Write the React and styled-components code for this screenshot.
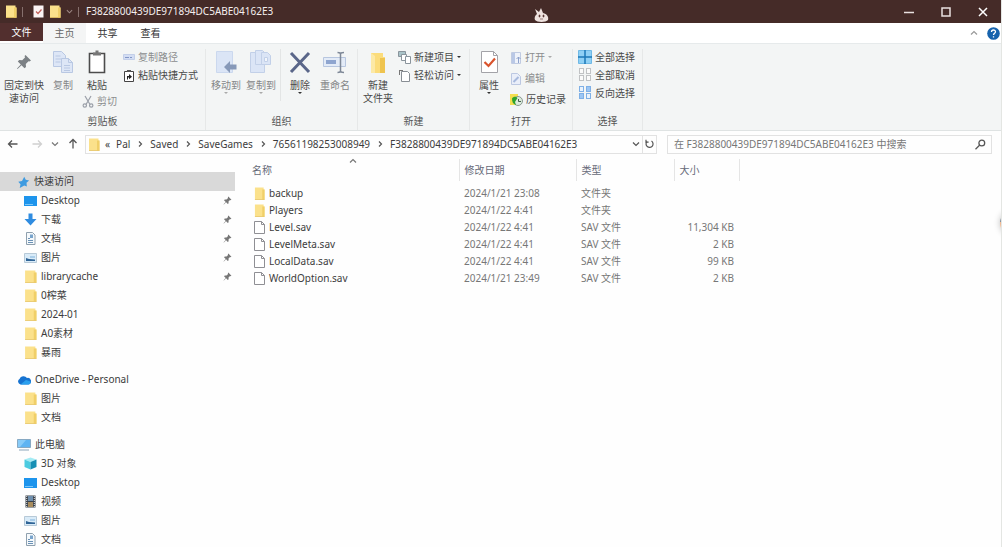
import React, { useState } from 'react';
import styled, { createGlobalStyle } from 'styled-components';

const GlobalStyle = createGlobalStyle`
  * {
    box-sizing: border-box;
  }
  body {
    margin: 0;
    background: #fefefe;
  }
  button, input, a, table {
    font: inherit;
    color: inherit;
  }
  button {
    margin: 0;
    padding: 0;
    border: none;
    background: none;
  }
  svg {
    display: block;
    flex: none;
  }
`
const Window = styled.div`
  position: relative;
  display: flex;
  flex-direction: column;
  height: 100vh;
  overflow: hidden;
  border-right: 1px solid #e4e6e3;
  font-family: "Noto Sans", "Noto Sans CJK SC", sans-serif;
  font-size: 10px;
  line-height: 13px;
  color: #3c3c3c;
`
const TitleBar = styled.header`
  display: flex;
  flex: none;
  align-items: center;
  height: 23px;
  padding-left: 5px;
  background: #452b28;
  color: #f4eeee;
`
const QuickTools = styled.div`
  display: flex;
  align-items: center;
  gap: 5px;
  margin-right: 7px;
`
const Bar = styled.span`
  width: 1px;
  height: 10px;
  background: #86706d;
`
const WindowTitle = styled.h1`
  flex: 1;
  margin: 0;
  font-size: 10px;
  font-weight: 400;
`
const WindowButton = styled.button`
  display: flex;
  align-items: center;
  justify-content: center;
  width: 37px;
  height: 22px;
`
const TabBar = styled.div`
  display: flex;
  flex: none;
  align-items: stretch;
  height: 20px;
  background: #fff;
`
const Tab = styled.button`
  width: 43px;
  background: ${(props) => (props.$active ? '#f4f5f5' : 'none')};
  color: ${(props) => (props.$active ? '#666' : '#333')};
`
const FileTab = styled.button`
  width: 43px;
  margin-bottom: 2px;
  background: #522f2e;
  color: #fff;
`
const TabTools = styled.div`
  display: flex;
  align-items: center;
  gap: 9px;
  margin-left: auto;
  padding-right: 1px;
`
const Ribbon = styled.div`
  display: flex;
  flex: none;
  height: 88px;
  padding-top: 5px;
  border-top: 1px solid #e6eaeb;
  border-bottom: 1px solid #dfe3e3;
  background: #f3f5f5;
`
const Group = styled.section`
  display: flex;
  flex-direction: column;
  width: ${(props) => props.$width}px;
  border-right: 1px solid #e6e8e8;
`
const GroupBody = styled.div`
  display: flex;
  flex: 1;
  align-items: flex-start;
  padding-left: ${(props) => props.$pad || 0}px;
`
const GroupName = styled.h2`
  margin: 0;
  padding-bottom: 2px;
  font-size: 10px;
  font-weight: 400;
  text-align: center;
  color: #555;
`
const Column = styled.div`
  display: flex;
  flex-direction: column;
  align-items: flex-start;
  gap: ${(props) => props.$gap || 0}px;
  margin-left: ${(props) => props.$left || 0}px;
`
const BigButton = styled.button`
  display: flex;
  flex-direction: column;
  align-items: center;
  width: ${(props) => props.$width || 38}px;
  line-height: 13px;
  color: ${(props) => (props.$dim ? '#858788' : '#4a4a4a')};
  svg {
    margin-bottom: 4px;
  }
  span {
    white-space: nowrap;
  }
`
const Caret = styled.i`
  width: 0;
  height: 0;
  border: 2px solid transparent;
  border-top-color: ${(props) => (props.$dim ? '#aaa' : '#333')};
  border-bottom: none;
`
const SmallButton = styled.button`
  display: flex;
  align-items: center;
  gap: 3px;
  height: 16px;
  white-space: nowrap;
  color: ${(props) => (props.$dim ? '#8b8d8e' : '#4a4a4a')};
`
const Divider = styled.span`
  width: 1px;
  height: 52px;
  margin: 0 1px;
  background: #e3e5e5;
`
const AddressRow = styled.div`
  display: flex;
  flex: none;
  align-items: center;
  height: 26px;
  padding: 0 9px 0 7px;
  gap: 10px;
`
const NavButtons = styled.div`
  display: flex;
  align-items: center;
  gap: 6px;
`
const NavButton = styled.button`
  display: flex;
  justify-content: center;
  min-width: 12px;
  margin-right: ${(props) => props.$space || 0}px;
`
const AddressBox = styled.div`
  display: flex;
  flex: 1;
  align-items: center;
  height: 19px;
  margin-left: -4px;
  padding-left: 2px;
  border: 1px solid #e2e2e2;
`
const Crumbs = styled.nav`
  display: flex;
  flex: 1;
  align-items: center;
  gap: 6px;
  margin-left: 5px;
`
const RefreshButton = styled.button`
  display: flex;
  align-items: center;
  height: 17px;
  margin-left: 2px;
  padding: 0 2px;
  border-left: 1px solid #e2e2e2;
`
const SearchBox = styled.label`
  display: flex;
  align-items: center;
  width: 325px;
  height: 19px;
  padding: 0 5px 0 6px;
  border: 1px solid #e2e2e2;
`
const SearchInput = styled.input`
  flex: 1;
  min-width: 0;
  padding: 0;
  border: none;
  outline: none;
  background: none;
  &::placeholder {
    color: #777;
    opacity: 1;
  }
`
const Main = styled.div`
  display: flex;
  flex: 1;
  min-height: 0;
`
const Sidebar = styled.nav`
  flex: none;
  width: 235px;
  padding-top: 15px;
  overflow: hidden;
`
const NavSection = styled.div`
  margin-bottom: 8px;
`
const NavLink = styled.a`
  display: flex;
  align-items: center;
  gap: 4px;
  height: 19px;
  padding: 0 3px 0 ${(props) => (props.$root ? 17 : 24)}px;
  background: ${(props) => (props.$active ? '#d9d9d9' : 'none')};
  text-decoration: none;
  span {
    flex: 1;
  }
`
const Files = styled.main`
  flex: 1;
  padding: 2px 0 0 12px;
`
const FileTable = styled.table`
  width: 492px;
  border-collapse: collapse;
  table-layout: fixed;
`
const HeadCell = styled.th`
  position: relative;
  width: ${(props) => props.$width}px;
  height: 22px;
  padding: 0 0 0 5px;
  border-right: 1px solid #e5e5e5;
  font-weight: 400;
  text-align: left;
  color: #666a78;
`
const SortMark = styled.span`
  position: absolute;
  top: -2px;
  left: 48%;
`
const Cell = styled.td`
  height: 17px;
  padding: 0 5px;
  text-align: ${(props) => (props.$right ? 'right' : 'left')};
  color: #777;
`
const Spacer = styled.tr`
  height: 4px;
`
const FileName = styled.div`
  display: flex;
  align-items: center;
  gap: 4px;
  padding-left: 2px;
  color: #3c3c3c;
`
const Mascot = styled.div`
  position: absolute;
  top: 6px;
  left: 54%;
  margin-left: -8px;
`
const EdgeAvatar = styled.div`
  position: absolute;
  top: 211px;
  right: -23px;
  width: 24px;
  height: 24px;
  border-radius: 50%;
  background: linear-gradient(#6d7b8b 45%, #f0b58c 45%);
  box-shadow: 0 0 6px rgba(0, 0, 0, 0.25);
`

const Folder = ({ w = 12, h = 13 }) => (
  <svg width={w} height={h} viewBox="0 0 12 13" preserveAspectRatio="none">
    <path d="M1 .5h9.500v2h1v10H1z" fill="#fbe18b" />
    <path d="M9 2.500h2.500v10H9z" fill="#f0cf68" />
    <path d="M1 12h10.500v.8H1z" fill="#e6c563" />
  </svg>
)
const Pin = ({ size = 9, color = '#777' }) => (
  <svg width={size} height={size} viewBox="0 0 16 16" fill={color}>
    <path d="M9.500 1 15 6.500l-1.500 1-1-.3-2.700 2.700.2 3-1.500 1.300-3-3L1.500 15 1 14.500l3.800-4-3-3L3.200 6l3 .2L9 3.500 8.600 2.100z" />
  </svg>
)
const Chevron = ({ dir = 'right', color = '#555', size = 8 }) => {
  const d = {
    right: 'M3 1.500 5.500 4 3 6.500',
    down: 'M1 2.500 4 5.500l3-3',
    up: 'M1 5.500 4 2.500l3 3',
  }
  return (
    <svg width={size} height={size} viewBox="0 0 8 8" fill="none" stroke={color} strokeWidth="1.200">
      <path d={d[dir]} />
    </svg>
  )
}
const Arrow = ({ dir, color = '#555' }) => {
  const d = {
    left: 'M10.500 6h-9M5 2.500 1.500 6 5 9.500',
    right: 'M1.500 6h9M7 2.500l3.500 3.500L7 9.500',
    up: 'M6 10.500v-9M2.500 5 6 1.500 9.500 5',
  }
  return (
    <svg width="12" height="12" viewBox="0 0 12 12" fill="none" stroke={color} strokeWidth="1.300">
      <path d={d[dir]} />
    </svg>
  )
}
const CopyIcon = () => (
  <svg width="24" height="26" viewBox="0 0 24 26" fill="#dde6f6" stroke="#b9c8e3">
    <path d="M2.500 2.500h8l4 4v11h-12z" />
    <path d="M4.500 7h5M4.500 10h6M4.500 13h5" />
    <path d="M10.500 9.500h7l4 4v10h-11z" />
    <path d="M17.500 9.500v4h4M13 16.500h6M13 19h6M13 21.500h6" fill="none" />
  </svg>
)
const PasteIcon = () => (
  <svg width="24" height="26" viewBox="0 0 24 26">
    <path d="M4.500 4.500h15v19h-15z" fill="#fff" stroke="#4c4c4c" strokeWidth="1.600" />
    <path d="M8 3.500h2.500V1.500h3v2H16v3H8z" fill="#777" />
  </svg>
)
const MoveToIcon = () => (
  <svg width="24" height="26" viewBox="0 0 24 26">
    <path d="M2.500 2.500h16v21h-16z" fill="#dbe5f6" stroke="#cbd8ee" />
    <path d="m10 18 6-6v3.500h6.500v5H16V24z" fill="#8799b8" />
  </svg>
)
const CopyToIcon = () => (
  <svg width="24" height="26" viewBox="0 0 24 26" fill="#dbe5f6" stroke="#c2d0e8">
    <path d="M1.500 3.500h14v20h-14z" />
    <path d="M6.500 1.500h7l3 3v11h-10z" />
    <path d="M12.500 3.500h6l3 3v9h-9z" />
    <path d="M15.500 8.500h3v4h-3z" fill="#f3f6fb" />
  </svg>
)
const DeleteIcon = () => (
  <svg width="24" height="26" viewBox="0 0 24 26" stroke="#5a6689" strokeWidth="3">
    <path d="m3 4 18 19M21 4 3 23" />
  </svg>
)
const RenameIcon = () => (
  <svg width="24" height="26" viewBox="0 0 24 26" fill="none">
    <path d="M.5 8.500h22v9H.5z" fill="#e3ebf7" stroke="#b7c6df" />
    <path d="M3 11h10v4H3z" fill="#8ea5cf" />
    <path d="M14.500 3.500c2 0 3 .5 3 1.500v17c0 1-1 1.500-3 1.500M21 3.500c-2 0-3.500.5-3.500 1.500v17c0 1 1.500 1.500 3.500 1.500" stroke="#7e8897" strokeWidth="1.500" />
  </svg>
)
const BigFolder = () => (
  <svg width="24" height="26" viewBox="0 0 24 26">
    <path d="M5 4h12v4h2v16H5z" fill="#fbdc7b" />
    <path d="M14 9h5v15h-5z" fill="#efc44f" />
    <path d="M5 4l4 3v17H5z" fill="#fce9a6" />
  </svg>
)
const PropertiesIcon = () => (
  <svg width="24" height="26" viewBox="0 0 24 26" fill="none">
    <path d="M4.500 2.500h12l4 4v17h-16z" fill="#fff" stroke="#a3a3a8" />
    <path d="M16.500 2.500v4h4" stroke="#a3a3a8" />
    <path d="m7.500 13 4 4L18 9.500" stroke="#d9532c" strokeWidth="2.200" />
  </svg>
)
const PathIcon = () => (
  <svg width="12" height="12" viewBox="0 0 12 12">
    <path d="M.5 3.500h11v5H.5z" fill="#d3ddf3" stroke="#c3cfe9" />
    <path d="M2 6.500h4M7 6.500h2" stroke="#8296c7" />
  </svg>
)
const ShortcutIcon = () => (
  <svg width="12" height="13" viewBox="0 0 12 13" fill="none">
    <path d="M1.500 2.500h9v10h-9z" fill="#fff" stroke="#444" />
    <path d="M4 1h4v2H4z" fill="#555" />
    <path d="M4 10.500V7h2V5l3 2.700-3 2.600V8.500H5v2z" fill="#222" />
  </svg>
)
const CutIcon = () => (
  <svg width="12" height="13" viewBox="0 0 12 13" fill="none" stroke="#9a9fa8" strokeWidth="1.200">
    <path d="M3 1l5 8.500M9 1 4 9.500" />
    <circle cx="2.800" cy="10.500" r="1.700" />
    <circle cx="9.200" cy="10.500" r="1.700" />
  </svg>
)
const NewItemIcon = () => (
  <svg width="13" height="13" viewBox="0 0 13 13" fill="#fff" stroke="#8a949c">
    <path d="M.5.5h7v5h-7z" fill="#a9c3c8" />
    <path d="M3.500 3.500h5v6h-5z" />
    <path d="M7.500 5.500h5v7h-5z" />
  </svg>
)
const EasyAccessIcon = () => (
  <svg width="13" height="13" viewBox="0 0 13 13" fill="none" stroke="#888e94">
    <path d="M3.500 2.500h6l2 2v8h-8z" fill="#fff" />
    <path d="M1 1.500h4M1.500 1v5" stroke="#777" />
  </svg>
)
const OpenIcon = () => (
  <svg width="12" height="13" viewBox="0 0 12 13" fill="none">
    <path d="M1.500 1.500h9v11h-9z" fill="#eef2fa" stroke="#c0cbe2" />
    <path d="M2 2h3v10H2z" fill="#b9c8e6" />
    <path d="M8.500 12V6M6.500 8l2-2 2 2" stroke="#8ea2cc" />
  </svg>
)
const EditIcon = () => (
  <svg width="12" height="13" viewBox="0 0 12 13" fill="none">
    <path d="M1.500 1.500h6l3 3v8h-9z" fill="#e9eef9" stroke="#bcc8e2" />
    <path d="m3.500 10 5-5" stroke="#a7b9dd" strokeWidth="2" />
  </svg>
)
const HistoryIcon = () => (
  <svg width="13" height="13" viewBox="0 0 13 13">
    <path d="M0 1h8v11H0z" fill="#f4de4f" />
    <circle cx="8" cy="8" r="4.500" fill="#dcebdc" stroke="#8b9a92" />
    <path d="M2 5.500c1-2 4-2.500 5.500-.5L5 9l1 3C3 11 2 9 2 5.500z" fill="#30a32c" />
    <path d="M8.500 6v2.500H11" stroke="#44604c" fill="none" />
  </svg>
)
const SelectIcon = ({ kind }) => {
  if (kind === 'all') {
    return (
      <svg width="14" height="14" viewBox="0 0 14 14">
        <path d="M.5.5h13v13H.5z" fill="#8fd0f5" stroke="#6fb9e6" />
        <path d="M7 0v14M0 7h14" stroke="#1d78b8" strokeWidth="1.500" />
      </svg>
    )
  }
  const fills = kind === 'none'
    ? ['#fbfbfb', '#fbfbfb', '#fbfbfb', '#fbfbfb']
    : ['#e9f2fc', '#9cc6f4', '#9cc6f4', '#e9f2fc']
  const spots = [[1, 1], [8, 1], [1, 8], [8, 8]]
  return (
    <svg width="14" height="14" viewBox="0 0 14 14">
      {spots.map(([x, y], i) => (
        <rect key={i} x={x + 0.5} y={y - 0.5} width="4" height="5" fill={fills[i]}
          stroke={kind === 'none' ? '#c0c2c4' : '#7fb0e6'} />
      ))}
    </svg>
  )
}
const Star = () => (
  <svg width="13" height="12" viewBox="0 0 16 16" fill="#3f9be0">
    <path d="M9 1l2 4 4.500 1-3.500 3 .5 5-3.500-1.500L3 16l1-5-3-3.500 5-1z" />
  </svg>
)
const Monitor = () => (
  <svg width="13" height="12" viewBox="0 0 13 12">
    <path d="M0 1h13v10H0z" fill="#1d94ec" />
    <path d="M1 9.500h8" stroke="#7cc7f8" />
  </svg>
)
const Download = () => (
  <svg width="13" height="13" viewBox="0 0 13 13">
    <path d="M4.500.5h4V6h4l-6 6.500-6-6.500h4z" fill="#2f8ce0" />
  </svg>
)
const DocIcon = () => (
  <svg width="13" height="13" viewBox="0 0 13 13" fill="none">
    <path d="M2.500.5h6l2.500 2.500v9.500H2.500z" fill="#f5f9fc" stroke="#8fa0ae" />
    <path d="M4 6.500h2M4 8.500h5M4 10.500h5" stroke="#6a91b5" />
    <path d="M6 2.500h3v3.500H6z" fill="#79a4cc" />
  </svg>
)
const PictureIcon = () => (
  <svg width="13" height="12" viewBox="0 0 13 12">
    <path d="M.5 1.500h12v9H.5z" fill="#d9ebf8" stroke="#b7c9d7" />
    <path d="M2 9V6l3 1 6 .5V9z" fill="#2f6496" />
    <path d="M6 5h5" stroke="#7cb1dc" />
  </svg>
)
const Cloud = () => (
  <svg width="14" height="10" viewBox="0 0 14 10">
    <path d="M3.500 9.500A3 3 0 0 1 2.500 4 4.300 4.300 0 0 1 10 3a3.200 3.200 0 0 1 1.500 6.500z" fill="#1673d1" />
    <path d="M3.500 9.500 9 5l4.500 1.500c.5 1.500-.5 3-2 3z" fill="#2ba0ee" />
  </svg>
)
const Computer = () => (
  <svg width="14" height="13" viewBox="0 0 14 13">
    <path d="M.5 1.500h13v8H.5z" fill="#5fb4f2" stroke="#87a9c3" />
    <path d="M2 12h10" stroke="#8ca6ba" />
    <path d="M1 2h8L3 9H1z" fill="#88cbf8" />
  </svg>
)
const Cube = () => (
  <svg width="13" height="13" viewBox="0 0 13 13">
    <path d="m6.500.5 6 2-6 2.500-6-2.500z" fill="#a4ebf4" />
    <path d="m.5 2.500 6 2.500v7.500l-6-2.500z" fill="#4ccbe0" />
    <path d="m12.500 2.500-6 2.500v7.500l6-2.500z" fill="#168fb4" />
  </svg>
)
const Film = () => (
  <svg width="13" height="13" viewBox="0 0 13 13">
    <path d="M1.500.5h10v12h-10z" fill="#3b424b" />
    <path d="M4 1h5v5H4z" fill="#6f8fae" />
    <path d="M4 7h5v5H4z" fill="#a88c5d" />
    <path d="M2.700 1v11M10.300 1v11" stroke="#e6e6e6" strokeDasharray="1 1" />
  </svg>
)
const SideFolder = () => <Folder w={13} h={13} />
const FilePage = () => (
  <svg width="11" height="13" viewBox="0 0 11 13" fill="#fff" stroke="#8f8f94">
    <path d="M.5.5h7l3 3v9H.5z" />
    <path d="M7.500.5v3h3" fill="none" />
  </svg>
)
const Magnifier = () => (
  <svg width="11" height="11" viewBox="0 0 11 11" fill="none" stroke="#555" strokeWidth="1.300">
    <circle cx="6.800" cy="4" r="2.900" />
    <path d="m4.500 6.200-4 4" />
  </svg>
)
const Refresh = () => (
  <svg width="9" height="10" viewBox="0 0 9 10" fill="none" stroke="#555" strokeWidth="1.200">
    <path d="M6.500 2A3.500 3.500 0 1 1 2 2.500" />
    <path d="M1 .8v2.400h2.600" />
  </svg>
)
const CheckPage = () => (
  <svg width="11" height="13" viewBox="0 0 11 13">
    <path d="M.5.5h10v12H.5z" fill="#fbf4f4" />
    <path d="m3 6.500 2 2 3.500-4" fill="none" stroke="#c0605a" strokeWidth="1.200" />
  </svg>
)
const Help = () => (
  <svg width="13" height="13" viewBox="0 0 13 13">
    <circle cx="6.500" cy="6.500" r="6.300" fill="#1763ad" />
    <path d="M4.500 5c0-2.700 4-2.500 4-.3 0 1.500-2 1.500-2 3.300M6.500 9.300v1.300" fill="none" stroke="#fff" strokeWidth="1.300" />
  </svg>
)

const sections = [
  {
    name: '快速访问', icon: Star, active: true,
    items: [
      { name: 'Desktop', icon: Monitor, pinned: true },
      { name: '下载', icon: Download, pinned: true },
      { name: '文档', icon: DocIcon, pinned: true },
      { name: '图片', icon: PictureIcon, pinned: true },
      { name: 'librarycache', icon: SideFolder, pinned: true },
      { name: '0榨菜', icon: SideFolder },
      { name: '2024-01', icon: SideFolder },
      { name: 'A0素材', icon: SideFolder },
      { name: '暴雨', icon: SideFolder },
    ],
  },
  {
    name: 'OneDrive - Personal', icon: Cloud,
    items: [
      { name: '图片', icon: SideFolder },
      { name: '文档', icon: SideFolder },
    ],
  },
  {
    name: '此电脑', icon: Computer,
    items: [
      { name: '3D 对象', icon: Cube },
      { name: 'Desktop', icon: Monitor },
      { name: '视频', icon: Film },
      { name: '图片', icon: PictureIcon },
      { name: '文档', icon: DocIcon },
    ],
  },
]
const files = [
  { name: 'backup', date: '2024/1/21 23:08', type: '文件夹', size: '' },
  { name: 'Players', date: '2024/1/22 4:41', type: '文件夹', size: '' },
  { name: 'Level.sav', date: '2024/1/22 4:41', type: 'SAV 文件', size: '11,304 KB' },
  { name: 'LevelMeta.sav', date: '2024/1/22 4:41', type: 'SAV 文件', size: '2 KB' },
  { name: 'LocalData.sav', date: '2024/1/22 4:41', type: 'SAV 文件', size: '99 KB' },
  { name: 'WorldOption.sav', date: '2024/1/21 23:49', type: 'SAV 文件', size: '2 KB' },
]
const folderId = 'F3828800439DE971894DC5ABE04162E3'
const crumbs = ['Pal', 'Saved', 'SaveGames', '76561198253008949', folderId]

function RibbonBar() {
  return (
    <Ribbon>
      <Group $width={206}>
        <GroupBody>
          <BigButton $width={48}>
            <svg width="24" height="26" viewBox="-4 -5 24 26" fill="#7c8185">
              <path d="M9.500 1 15 6.500l-1.500 1-1-.3-2.700 2.700.2 3-1.500 1.300-3-3L1.500 15 1 14.500l3.800-4-3-3L3.200 6l3 .2L9 3.500 8.600 2.100z" />
            </svg>
            <span>固定到快</span>
            <span>速访问</span>
          </BigButton>
          <BigButton $width={30} $dim><CopyIcon /><span>复制</span></BigButton>
          <Column $left={4} $gap={1}>
            <BigButton $width={30}><PasteIcon /><span>粘贴</span></BigButton>
            <SmallButton $dim><CutIcon />剪切</SmallButton>
          </Column>
          <Column $left={6} $gap={2}>
            <SmallButton $dim><PathIcon />复制路径</SmallButton>
            <SmallButton><ShortcutIcon />粘贴快捷方式</SmallButton>
          </Column>
        </GroupBody>
        <GroupName>剪贴板</GroupName>
      </Group>
      <Group $width={152}>
        <GroupBody $pad={3}>
          <BigButton $width={34} $dim><MoveToIcon /><span>移动到</span><Caret $dim /></BigButton>
          <BigButton $width={36} $dim><CopyToIcon /><span>复制到</span><Caret $dim /></BigButton>
          <Divider />
          <BigButton $width={36}><DeleteIcon /><span>删除</span><Caret /></BigButton>
          <BigButton $width={34} $dim><RenameIcon /><span>重命名</span></BigButton>
        </GroupBody>
        <GroupName>组织</GroupName>
      </Group>
      <Group $width={112}>
        <GroupBody $pad={2}>
          <BigButton $width={36}><BigFolder /><span>新建</span><span>文件夹</span></BigButton>
          <Column $left={2} $gap={2}>
            <SmallButton><NewItemIcon />新建项目<Caret /></SmallButton>
            <SmallButton><EasyAccessIcon />轻松访问<Caret /></SmallButton>
          </Column>
        </GroupBody>
        <GroupName>新建</GroupName>
      </Group>
      <Group $width={103}>
        <GroupBody>
          <BigButton $width={38}><PropertiesIcon /><span>属性</span><Caret /></BigButton>
          <Column $left={2} $gap={5}>
            <SmallButton $dim><OpenIcon />打开<Caret $dim /></SmallButton>
            <SmallButton $dim><EditIcon />编辑</SmallButton>
            <SmallButton><HistoryIcon />历史记录</SmallButton>
          </Column>
        </GroupBody>
        <GroupName>打开</GroupName>
      </Group>
      <Group $width={70}>
        <GroupBody $pad={5}>
          <Column $gap={2}>
            <SmallButton><SelectIcon kind="all" />全部选择</SmallButton>
            <SmallButton><SelectIcon kind="none" />全部取消</SmallButton>
            <SmallButton><SelectIcon kind="invert" />反向选择</SmallButton>
          </Column>
        </GroupBody>
        <GroupName>选择</GroupName>
      </Group>
    </Ribbon>
  )
}

function App() {
  const [search, setSearch] = useState('');
  const [tab, setTab] = useState('主页');

  return (
    <Window>
      <GlobalStyle />
      <TitleBar>
        <QuickTools>
          <Folder />
          <Bar />
          <span />
          <CheckPage />
          <Folder />
          <Chevron dir="down" color="#9c8885" size={7} />
          <Bar />
        </QuickTools>
        <WindowTitle>{folderId}</WindowTitle>
        <WindowButton aria-label="最小化">
          <svg width="10" height="10" viewBox="0 0 10 10"><path d="M0 5.500h10" stroke="#e9e1e0" strokeWidth="1.500" /></svg>
        </WindowButton>
        <WindowButton aria-label="最大化">
          <svg width="10" height="10" viewBox="0 0 10 10"><path d="M1 1h8v8H1z" fill="none" stroke="#e9e1e0" strokeWidth="1.500" /></svg>
        </WindowButton>
        <WindowButton aria-label="关闭">
          <svg width="10" height="10" viewBox="0 0 10 10"><path d="m1 1 8 8M9 1 1 9" stroke="#fff" strokeWidth="1.500" /></svg>
        </WindowButton>
      </TitleBar>
      <TabBar>
        <FileTab>文件</FileTab>
        {['主页', '共享', '查看'].map((name) => (
          <Tab key={name} $active={tab === name} onClick={() => setTab(name)}>{name}</Tab>
        ))}
        <TabTools>
          <Chevron dir="up" color="#999" />
          <Help />
        </TabTools>
      </TabBar>
      <RibbonBar />
      <AddressRow>
        <NavButtons>
          <NavButton aria-label="后退" $space={6}><Arrow dir="left" /></NavButton>
          <NavButton aria-label="前进"><Arrow dir="right" color="#d0d0d0" /></NavButton>
          <NavButton aria-label="最近浏览的位置"><Chevron dir="down" color="#777" /></NavButton>
          <NavButton aria-label="上移"><Arrow dir="up" /></NavButton>
        </NavButtons>
        <AddressBox>
          <Folder />
          <Crumbs>
            <span>«</span>
            {crumbs.map((crumb, i) => (
              <React.Fragment key={crumb}>
                {i > 0 && <Chevron />}
                <button>{crumb}</button>
              </React.Fragment>
            ))}
          </Crumbs>
          <Chevron dir="down" />
          <RefreshButton aria-label="刷新"><Refresh /></RefreshButton>
        </AddressBox>
        <SearchBox>
          <SearchInput
            aria-label="搜索"
            placeholder={`在 ${folderId} 中搜索`}
            value={search}
            onChange={(e) => setSearch(e.target.value)}
          />
          <Magnifier />
        </SearchBox>
      </AddressRow>
      <Main>
        <Sidebar>
          {sections.map((section) => (
            <NavSection key={section.name}>
              <NavLink href="#" $root $active={section.active}>
                <section.icon /><span>{section.name}</span>
              </NavLink>
              {section.items.map((item) => (
                <NavLink href="#" key={item.name}>
                  <item.icon /><span>{item.name}</span>
                  {item.pinned && <Pin />}
                </NavLink>
              ))}
            </NavSection>
          ))}
        </Sidebar>
        <Files>
          <FileTable>
            <thead>
              <tr>
                <HeadCell $width={212}>
                  名称
                  <SortMark><Chevron dir="up" color="#777" /></SortMark>
                </HeadCell>
                <HeadCell $width={117}>修改日期</HeadCell>
                <HeadCell $width={98}>类型</HeadCell>
                <HeadCell $width={65}>大小</HeadCell>
              </tr>
            </thead>
            <tbody>
              <Spacer />
              {files.map((file) => (
                <tr key={file.name}>
                  <Cell>
                    <FileName>
                      {file.size ? <FilePage /> : <Folder w={11} />}
                      {file.name}
                    </FileName>
                  </Cell>
                  <Cell>{file.date}</Cell>
                  <Cell>{file.type}</Cell>
                  <Cell $right>{file.size}</Cell>
                </tr>
              ))}
            </tbody>
          </FileTable>
        </Files>
      </Main>
      <Mascot>
        <svg width="16" height="17" viewBox="0 0 16 17">
          <path d="M4 8 2 3l4 3 2-4 2 5c4 1 6 4 5 7-2 2.500-11 2.500-13 0-1-2 0-4.500 2-6z" fill="#eee2df" />
          <path d="M6 9h1v2H6zM10 9h1v2h-1zM7 13h3" fill="#5a3a37" stroke="#5a3a37" strokeWidth=".6" />
        </svg>
      </Mascot>
      <EdgeAvatar />
    </Window>
  )
}
export default App;
